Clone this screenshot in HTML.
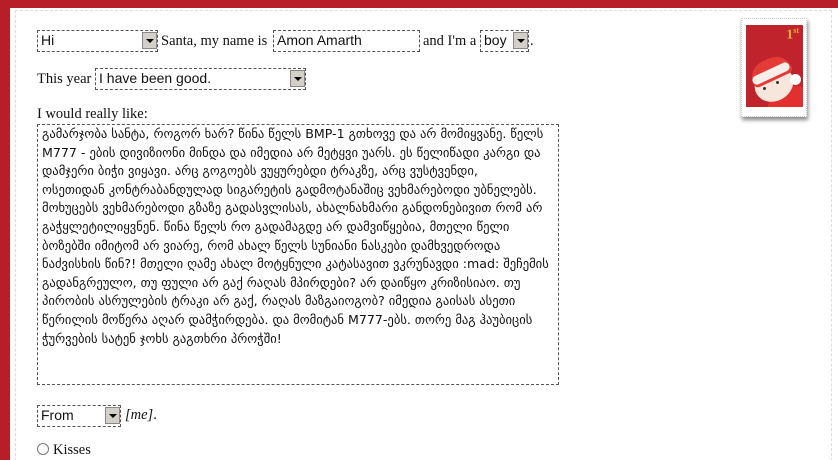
<!DOCTYPE html>
<html><head><meta charset="utf-8"><style>
html,body{margin:0;width:838px;height:460px;overflow:hidden}
body{background:#b81e28;font-family:"Liberation Serif",serif;font-size:14.5px;color:#111;position:relative}
.panel{position:absolute;left:10px;top:8px;width:828px;height:452px;background:#fff}
.dash{position:absolute;left:15px;top:10px;width:815px;height:460px;border-left:1px dashed #ddd;border-top:1px dashed #ddd;border-right:1px dashed #ddd}
.a{position:absolute;white-space:nowrap}
.f{position:absolute;border:1px dashed #555;background:#fff;font-family:"Liberation Sans",sans-serif;font-size:14px;box-sizing:border-box;padding:1px 3px;line-height:17px}
.btn{position:absolute;right:0;top:1px;width:15px;height:17px;background:#d4d0c8;border:1px solid #888;box-sizing:border-box}
.btn:after{content:"";position:absolute;left:3px;top:6px;border-left:4px solid transparent;border-right:4px solid transparent;border-top:4px solid #000}
.ta{position:absolute;left:37px;top:124px;width:522px;height:261px;border:1px dashed #555;box-sizing:border-box;padding:0 4px;font-family:"DejaVu Sans","Liberation Sans",sans-serif;font-size:12.6px;line-height:18.6px;white-space:nowrap;overflow:hidden}
</style></head><body>
<div class="panel"></div><div class="dash"></div>
<div class="f" style="left:37px;top:30px;width:121px;height:22px">Hi<div class="btn"></div></div>
<div class="a" style="left:161px;top:33px">Santa, my name is</div>
<div class="f" style="left:273px;top:30px;width:147px;height:22px">Amon Amarth</div>
<div class="a" style="left:423px;top:33px">and I'm a</div>
<div class="f" style="left:480px;top:30px;width:49px;height:22px">boy<div class="btn"></div></div>
<div class="a" style="left:530px;top:33px">.</div>
<div class="a" style="left:37px;top:71px">This year</div>
<div class="f" style="left:95px;top:68px;width:211px;height:22px">I have been good.<div class="btn"></div></div>
<div class="a" style="left:37px;top:106px">I would really like:</div>
<div class="ta"><div>გამარჯობა სანტა, როგორ ხარ? წინა წელს BMP-1 გთხოვე და არ მომიყვანე. წელს<br>M777 - ების დივიზიონი მინდა და იმედია არ მეტყვი უარს. ეს წელიწადი კარგი და<br>დამჯერი ბიჭი ვიყავი. არც გოგოებს ვუყურებდი ტრაკზე, არც ვუსტვენდი,<br>ოსეთიდან კონტრაბანდულად სიგარეტის გადმოტანაშიც ვეხმარებოდი უბნელებს.<br>მოხუცებს ვეხმარებოდი გზაზე გადასვლისას, ახალნახმარი განდონებივით რომ არ<br>გაჭყლეტილიყვნენ. წინა წელს რო გადამაგდე არ დამვიწყებია, მთელი წელი<br>ბოზებში იმიტომ არ ვიარე, რომ ახალ წელს სუნიანი ნასკები დამხვედროდა<br>ნაძვისხის წინ?! მთელი ღამე ახალ მოტყნული კატასავით ვკრუნავდი :mad: შეჩემის<br>გადანგრეულო, თუ ფული არ გაქ რაღას მპირდები? არ დაიწყო კრიზისიაო. თუ<br>პირობის ასრულების ტრაკი არ გაქ, რაღას მაზგაიოგობ? იმედია გაისას ასეთი<br>წერილის მოწერა აღარ დამჭირდება. და მომიტან M777-ებს. თორე მაგ ჰაუბიცის<br>ჭურვების სატენ ჯოხს გაგთხრი პროჭში!</div></div>
<div class="f" style="left:37px;top:405px;width:84px;height:22px">From<div class="btn"></div></div>
<div class="a" style="left:125px;top:407px"><i>[me]</i>.</div>
<div class="a" style="left:37px;top:442px"><span style="display:inline-block;width:10px;height:10px;border:1px solid #777;border-radius:50%;vertical-align:-1px;margin-right:4px"></span>Kisses</div>
<div style="position:absolute;left:741px;top:18px;width:66px;height:99px;background:#fff;box-shadow:1px 3px 4px #888;border:1px dotted #ccc;box-sizing:border-box"></div>
<div style="position:absolute;left:746px;top:25px;width:57px;height:82px;background:#c0232b;overflow:hidden">
<div style="position:absolute;right:4px;top:1px;color:#f2b13a;font-weight:bold;font-size:14px">1<sup style="font-size:8px">st</sup></div>
<div style="position:absolute;left:20px;top:62px;width:50px;height:40px;border-radius:50%;background:#e23030;transform:rotate(-30deg)"></div>
<div style="position:absolute;left:8px;top:42px;width:40px;height:34px;border-radius:50%;background:#f6e6dc;transform:rotate(-30deg)"></div>
<div style="position:absolute;left:3px;top:34px;width:42px;height:22px;border-radius:22px 22px 6px 6px;background:#e53b36;transform:rotate(-25deg)"></div>
<div style="position:absolute;left:5px;top:44px;width:40px;height:9px;border-radius:5px;background:#f6efe9;transform:rotate(-25deg)"></div>
<div style="position:absolute;left:44px;top:49px;width:11px;height:11px;border-radius:50%;background:#fff"></div>
<div style="position:absolute;left:17px;top:62px;width:3px;height:3px;border-radius:50%;background:#333"></div>
<div style="position:absolute;left:30px;top:56px;width:3px;height:3px;border-radius:50%;background:#333"></div>
</div>
</body></html>
